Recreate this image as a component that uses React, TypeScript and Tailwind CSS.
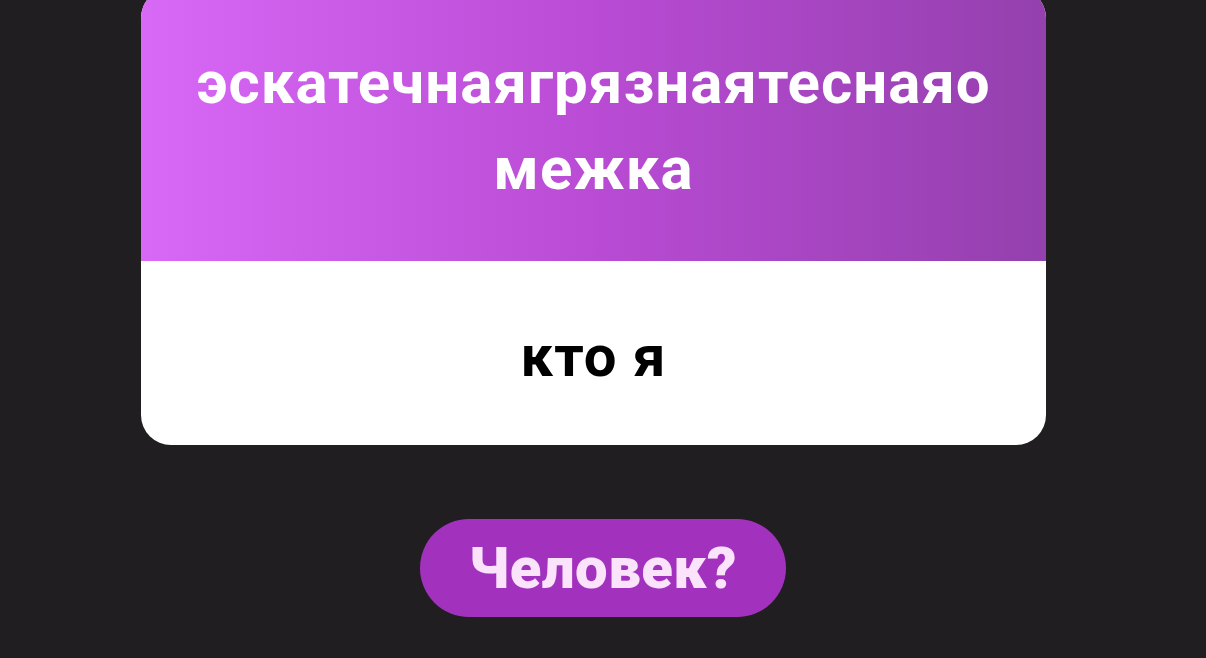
export default function App() {
  return (
    <div
      className="w-[1206px] h-[658px] overflow-hidden bg-[#211e21] flex flex-col items-center"
      style={{ fontFamily: "Roboto, 'Noto Sans', sans-serif" }}
    >
      <div className="mt-[-12px] w-[905px] ml-[-19px] rounded-[30px] overflow-hidden bg-white flex flex-col">
        <div className="h-[273px] bg-gradient-to-r from-[#d868f6] via-[#b94bd4] to-[#9440ae] flex flex-col items-center justify-center pt-[2px]">
          <div className="text-white font-bold text-[60px] leading-[86px] tracking-[1px] text-center">
            эскатечнаягрязнаятеснаяо
          </div>
          <div className="text-white font-bold text-[60px] leading-[86px] tracking-[1px] text-center">
            межка
          </div>
        </div>
        <div className="h-[184px] flex items-center justify-center pt-[6px]">
          <span className="text-black font-bold text-[58px] leading-none tracking-[1px]">кто я</span>
        </div>
      </div>
      <button className="mt-[74px] w-[366px] h-[98px] rounded-full bg-[#a232be] flex items-center justify-center">
        <span className="text-[#fbe4fb] font-black text-[58px] leading-none tracking-[0.5px]">Человек?</span>
      </button>
    </div>
  );
}
